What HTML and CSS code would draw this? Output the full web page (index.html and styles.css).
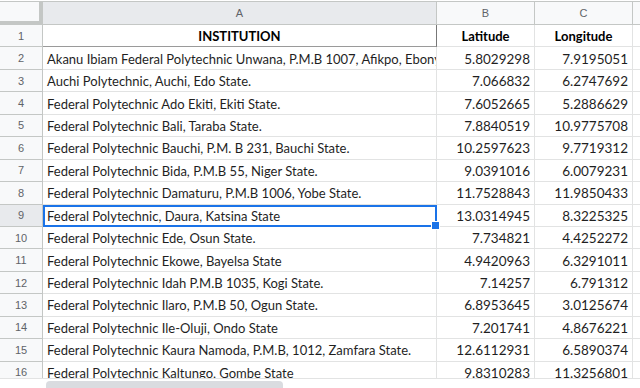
FILE: index.html
```html
<!DOCTYPE html>
<html lang="en">
  <head>
    <meta charset="UTF-8" />
    <title>Polytechnics</title>
    <link rel="stylesheet" href="styles.css">
  </head>
  <body>
    <section class="sheet">
      <div class="grid">
        <div class="corner"></div>
        <div class="col__head col__head--active">A</div>
        <div class="col__head">B</div>
        <div class="col__head">C</div>
        <div class="col__head"></div>

        <div class="row__head">1</div>
        <div class="cell cell--title cell--boxed">INSTITUTION</div>
        <div class="cell cell--title">Latitude</div>
        <div class="cell cell--title">Longitude</div>
        <div class="cell"></div>

        <div class="row__head">2</div>
        <div class="cell">Akanu Ibiam Federal Polytechnic Unwana, P.M.B 1007, Afikpo, Ebonyi State.</div>
        <div class="cell cell--num">5.8029298</div>
        <div class="cell cell--num">7.9195051</div>
        <div class="cell"></div>

        <div class="row__head">3</div>
        <div class="cell">Auchi Polytechnic, Auchi, Edo State.</div>
        <div class="cell cell--num">7.066832</div>
        <div class="cell cell--num">6.2747692</div>
        <div class="cell"></div>

        <div class="row__head">4</div>
        <div class="cell">Federal Polytechnic Ado Ekiti, Ekiti State.</div>
        <div class="cell cell--num">7.6052665</div>
        <div class="cell cell--num">5.2886629</div>
        <div class="cell"></div>

        <div class="row__head">5</div>
        <div class="cell">Federal Polytechnic Bali, Taraba State.</div>
        <div class="cell cell--num">7.8840519</div>
        <div class="cell cell--num">10.9775708</div>
        <div class="cell"></div>

        <div class="row__head">6</div>
        <div class="cell">Federal Polytechnic Bauchi, P.M. B 231, Bauchi State.</div>
        <div class="cell cell--num">10.2597623</div>
        <div class="cell cell--num">9.7719312</div>
        <div class="cell"></div>

        <div class="row__head">7</div>
        <div class="cell">Federal Polytechnic Bida, P.M.B 55, Niger State.</div>
        <div class="cell cell--num">9.0391016</div>
        <div class="cell cell--num">6.0079231</div>
        <div class="cell"></div>

        <div class="row__head">8</div>
        <div class="cell">Federal Polytechnic Damaturu, P.M.B 1006, Yobe State.</div>
        <div class="cell cell--num">11.7528843</div>
        <div class="cell cell--num">11.9850433</div>
        <div class="cell"></div>

        <div class="row__head row__head--active">9</div>
        <div class="cell cell--selected">Federal Polytechnic, Daura, Katsina State</div>
        <div class="cell cell--num">13.0314945</div>
        <div class="cell cell--num">8.3225325</div>
        <div class="cell"></div>

        <div class="row__head">10</div>
        <div class="cell">Federal Polytechnic Ede, Osun State.</div>
        <div class="cell cell--num">7.734821</div>
        <div class="cell cell--num">4.4252272</div>
        <div class="cell"></div>

        <div class="row__head">11</div>
        <div class="cell">Federal Polytechnic Ekowe, Bayelsa State</div>
        <div class="cell cell--num">4.9420963</div>
        <div class="cell cell--num">6.3291011</div>
        <div class="cell"></div>

        <div class="row__head">12</div>
        <div class="cell">Federal Polytechnic Idah P.M.B 1035, Kogi State.</div>
        <div class="cell cell--num">7.14257</div>
        <div class="cell cell--num">6.791312</div>
        <div class="cell"></div>

        <div class="row__head">13</div>
        <div class="cell">Federal Polytechnic Ilaro, P.M.B 50, Ogun State.</div>
        <div class="cell cell--num">6.8953645</div>
        <div class="cell cell--num">3.0125674</div>
        <div class="cell"></div>

        <div class="row__head">14</div>
        <div class="cell">Federal Polytechnic Ile-Oluji, Ondo State</div>
        <div class="cell cell--num">7.201741</div>
        <div class="cell cell--num">4.8676221</div>
        <div class="cell"></div>

        <div class="row__head">15</div>
        <div class="cell">Federal Polytechnic Kaura Namoda, P.M.B, 1012, Zamfara State.</div>
        <div class="cell cell--num">12.6112931</div>
        <div class="cell cell--num">6.5890374</div>
        <div class="cell"></div>

        <div class="row__head">16</div>
        <div class="cell">Federal Polytechnic Kaltungo, Gombe State</div>
        <div class="cell cell--num">9.8310283</div>
        <div class="cell cell--num">11.3256801</div>
        <div class="cell"></div>
      </div>

      <div class="scrollbar">
        <div class="scrollbar__thumb"></div>
      </div>
    </section>
  </body>
</html>
```

FILE: styles.css
```css
* {
  margin: 0;
  padding: 0;
  box-sizing: border-box;
}
html,
body {
  background-color: #fff;
  font-family: "Lato", "Liberation Sans", sans-serif;
}
.sheet {
  position: relative;
  height: 388px;
  overflow: hidden;
  padding-top: 1px;
}
.grid {
  display: grid;
  grid-template-columns: 43px 394px 98px 98px 1fr;
  grid-template-rows: 23px repeat(16, 22.45px);
  border-top: 1px solid #c4c7c5;
}

.corner {
  background-color: #f8f9fa;
  border-right: 4px solid #c4c7c5;
  border-bottom: 4px solid #c4c7c5;
}
.col__head {
  display: flex;
  align-items: center;
  justify-content: center;
  background-color: #f8f9fa;
  border-right: 1px solid #c4c7c5;
  border-bottom: 1px solid #c4c7c5;
  font-family: "Liberation Sans", sans-serif;
  font-size: 11px;
  color: #5f6368;
}
.col__head--active {
  background-color: #e8eaed;
}
.row__head {
  display: flex;
  align-items: center;
  justify-content: center;
  background-color: #f8f9fa;
  border-right: 1px solid #c4c7c5;
  border-bottom: 1px solid #c4c7c5;
  font-family: "Liberation Sans", sans-serif;
  font-size: 11px;
  color: #5f6368;
}
.row__head--active {
  background-color: #e8eaed;
}

.cell {
  display: flex;
  align-items: center;
  padding: 1px 4px 0 4px;
  border-right: 1px solid #e2e3e3;
  border-bottom: 1px solid #e2e3e3;
  white-space: nowrap;
  overflow: hidden;
  font-size: 13px;
  color: #1f1f1f;
}
.cell--num {
  justify-content: flex-end;
  font-size: 13.5px;
}
.cell--title {
  justify-content: center;
  font-weight: bold;
  color: #000;
}
.cell--boxed {
  border-right-color: #777;
  border-bottom-color: #9a9a9a;
}
.cell--selected {
  position: relative;
  overflow: visible;
  outline: 2px solid #1a73e8;
  outline-offset: -2px;
  padding-left: 4px;
}
.cell--selected::after {
  content: "";
  position: absolute;
  right: -4px;
  bottom: -4px;
  width: 7px;
  height: 7px;
  background-color: #1a73e8;
  border: 1px solid #fff;
}

.scrollbar {
  position: absolute;
  left: 0;
  right: 0;
  top: 378px;
  height: 12px;
  background-color: #fff;
  border-top: 1px solid #e2e3e3;
  padding: 2px 0 0 46px;
}
.scrollbar__thumb {
  width: 237px;
  height: 12px;
  border-radius: 4px;
  background-color: #dadce0;
}
```
